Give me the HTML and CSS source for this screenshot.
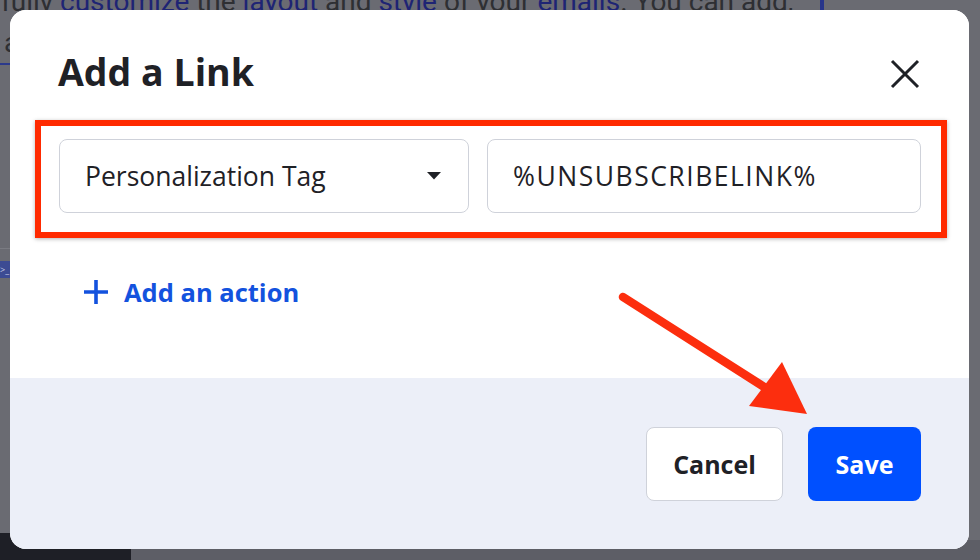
FILE: index.html
```html
<!DOCTYPE html>
<html lang="en">
<head>
<meta charset="utf-8">
<title>Add a Link</title>
<link rel="stylesheet" href="styles.css">
</head>
<body>
<div class="page">
  <p class="bg-line">fully <a>customize</a> the <a>layout</a> and <a>style</a> of your <a>emails</a>. You can add,</p>
  <span class="bg-bar"></span>
  <p class="bg-line2">a</p>
  <span class="bg-rule"></span>
  <span class="bg-rule2"></span>
  <span class="bg-icon">&gt;_</span>
  <span class="bg-dark"></span>
</div>

<div class="modal">
  <div class="modal-body">
    <div class="modal-head">
      <h1 class="title">Add a Link</h1>
      <svg class="close" width="30" height="30" viewBox="0 0 30 30" aria-label="Close">
        <path d="M2 2 L28 28 M28 2 L2 28" stroke="#1f2126" stroke-width="3" stroke-linecap="butt" fill="none"/>
      </svg>
    </div>
    <div class="highlight">
      <div class="select">
        <span>Personalization Tag</span>
        <svg class="caret" width="14" height="8" viewBox="0 0 14 8"><path d="M0 0 H14 L7 7.5 Z" fill="#1f2126"/></svg>
      </div>
      <div class="input">%UNSUBSCRIBELINK%</div>
    </div>
    <div class="add-action">
      <svg class="plus" width="24" height="24" viewBox="0 0 24 24"><path d="M12 0 V24 M0 12 H24" stroke="#1352de" stroke-width="3.6" fill="none"/></svg>
      <span>Add an action</span>
    </div>
  </div>
  <div class="modal-foot">
    <button class="btn btn-cancel">Cancel</button>
    <button class="btn btn-save">Save</button>
  </div>
</div>

<svg class="arrow" width="980" height="560" viewBox="0 0 980 560">
  <line x1="623" y1="297" x2="772" y2="392" stroke="#fc2e0e" stroke-width="8.5" stroke-linecap="round"/>
  <polygon points="782,362 749,406 807,414" fill="#fc2e0e"/>
</svg>
</body>
</html>
```

FILE: styles.css
```css
html, body {
  margin: 0;
  padding: 0;
}
body {
  width: 980px;
  height: 560px;
  overflow: hidden;
  background: #6a6b72;
  font-family: "Open Sans", "Noto Sans", sans-serif;
  position: relative;
}
.page {
  position: relative;
  width: 980px;
  height: 560px;
}
.bg-line {
  margin: 0;
  position: absolute;
  top: -15px;
  left: 1px;
  font-family: Roboto, "Noto Sans", sans-serif;
  font-size: 28px;
  line-height: 34px;
  color: #2e2f33;
  white-space: nowrap;
}
.bg-line a {
  color: #1e2474;
}
.bg-bar {
  position: absolute;
  left: 820px;
  top: 0;
  width: 4px;
  height: 20px;
  background: #27358a;
}
.bg-line2 {
  margin: 0;
  position: absolute;
  top: 26px;
  left: 4px;
  font-family: Roboto, sans-serif;
  font-size: 28px;
  line-height: 34px;
  color: #2e2f33;
}
.bg-rule {
  position: absolute;
  left: 0;
  top: 63px;
  width: 12px;
  height: 2px;
  background: #2c3a8c;
}
.bg-rule2 {
  position: absolute;
  left: 0;
  top: 248px;
  width: 12px;
  height: 1px;
  background: #7a7b82;
}
.bg-icon {
  position: absolute;
  left: 0;
  top: 261px;
  width: 10px;
  height: 17px;
  background: #3c4b93;
  color: #c6cbe6;
  font-size: 9px;
  line-height: 17px;
  overflow: hidden;
}
.bg-dark {
  position: absolute;
  left: 0;
  top: 533px;
  width: 131px;
  height: 27px;
  background: #1e1f26;
}
.page::after {
  content: "";
  position: absolute;
  left: 131px;
  top: 540px;
  width: 849px;
  height: 20px;
  background: #5d5e66;
}

.modal {
  position: absolute;
  left: 10px;
  top: 10px;
  width: 959px;
  height: 539px;
  border-radius: 16px;
  overflow: hidden;
  background: #ffffff;
  display: flex;
  flex-direction: column;
}
.modal-body {
  height: 368px;
  background: #ffffff;
  box-sizing: border-box;
  padding: 0 22px 0 25px;
}
.modal-head {
  display: flex;
  align-items: center;
  justify-content: space-between;
  padding: 31px 27px 0 23px;
  height: 62px;
}
.title {
  margin: 0;
  font-size: 37.5px;
  line-height: 44px;
  font-weight: 700;
  color: #1f2126;
}
.close {
  display: block;
  margin-top: 3px;
}
.highlight {
  margin-top: 17px;
  width: 912px;
  height: 118px;
  box-sizing: border-box;
  border: 6px solid #ff2a00;
  box-shadow: 0 1px 4px rgba(0, 0, 0, 0.3);
  padding: 13px 20px 0 18px;
  display: flex;
  gap: 18px;
}
.select, .input {
  height: 74px;
  box-sizing: border-box;
  border: 1.5px solid #cfd2da;
  border-radius: 8px;
  display: flex;
  align-items: center;
  font-size: 26.5px;
  color: #1f2126;
  padding-left: 25px;
}
.select {
  width: 410px;
  justify-content: space-between;
  padding-right: 27px;
}
.caret {
  display: block;
}
.input {
  width: 434px;
  letter-spacing: 1.5px;
}
.add-action {
  margin-top: 37px;
  margin-left: 49px;
  display: flex;
  align-items: center;
  gap: 16px;
  color: #1352de;
  font-size: 25.5px;
  font-weight: 700;
  line-height: 34px;
}
.plus {
  display: block;
}
.modal-foot {
  flex: 1;
  background: #eceff8;
  display: flex;
  justify-content: flex-end;
  align-items: flex-start;
  gap: 25px;
  padding: 49px 48px 0 0;
}
.btn {
  height: 74px;
  border-radius: 8px;
  font-family: "Open Sans", "Noto Sans", sans-serif;
  font-size: 25px;
  font-weight: 700;
  box-sizing: border-box;
  cursor: pointer;
}
.btn-cancel {
  width: 137px;
  background: #ffffff;
  color: #1f2126;
  border: 1.5px solid #cfd2da;
}
.btn-save {
  width: 113px;
  background: #0050ff;
  color: #ffffff;
  border: none;
}
.arrow {
  position: absolute;
  left: 0;
  top: 0;
  pointer-events: none;
}
```
